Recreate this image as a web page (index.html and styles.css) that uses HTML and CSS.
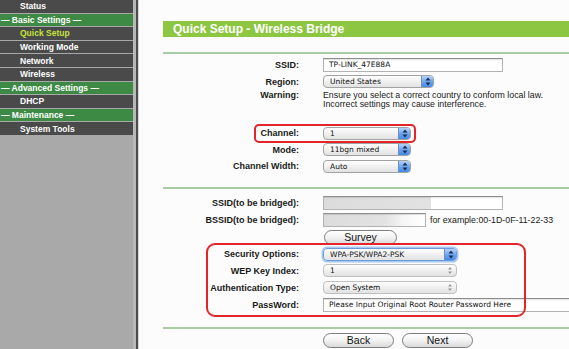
FILE: index.html
```html
<!DOCTYPE html>
<html>
<head>
<meta charset="utf-8">
<link rel="stylesheet" href="styles.css">
</head>
<body>
<div class="page">
  <nav class="side">
    <div class="menu">
      <div class="item">Status</div>
      <div class="group">— Basic Settings —</div>
      <div class="item active">Quick Setup</div>
      <div class="item">Working Mode</div>
      <div class="item">Network</div>
      <div class="item">Wireless</div>
      <div class="group">— Advanced Settings —</div>
      <div class="item">DHCP</div>
      <div class="group">— Maintenance —</div>
      <div class="item">System Tools</div>
    </div>
  </nav>
  <main class="main">
    <div class="titlebar">Quick Setup - Wireless Bridge</div>
    <div class="rule"></div>

    <section class="block b1">
      <div class="row"><div class="lbl">SSID:</div><div class="inp w180">TP-LINK_47E88A</div></div>
      <div class="row"><div class="lbl">Region:</div><div class="sel w111"><span class="txt">United States</span><span class="arr"><svg width="6" height="9" viewBox="0 0 6 9"><path d="M3 0.5L5.5 3.5H0.5Z M3 8.5L5.5 5.5H0.5Z" fill="#1b2c4a"/></svg></span></div></div>
      <div class="row warn"><div class="lbl">Warning:</div><div class="note">Ensure you select a correct country to conform local law.<br>Incorrect settings may cause interference.</div></div>
      <div class="row ch"><div class="lbl">Channel:</div><div class="sel w88"><span class="txt">1</span><span class="arr"><svg width="6" height="9" viewBox="0 0 6 9"><path d="M3 0.5L5.5 3.5H0.5Z M3 8.5L5.5 5.5H0.5Z" fill="#1b2c4a"/></svg></span></div></div>
      <div class="row ch"><div class="lbl">Mode:</div><div class="sel w88"><span class="txt">11bgn mixed</span><span class="arr"><svg width="6" height="9" viewBox="0 0 6 9"><path d="M3 0.5L5.5 3.5H0.5Z M3 8.5L5.5 5.5H0.5Z" fill="#1b2c4a"/></svg></span></div></div>
      <div class="row ch"><div class="lbl">Channel Width:</div><div class="sel w88"><span class="txt">Auto</span><span class="arr"><svg width="6" height="9" viewBox="0 0 6 9"><path d="M3 0.5L5.5 3.5H0.5Z M3 8.5L5.5 5.5H0.5Z" fill="#1b2c4a"/></svg></span></div></div>
    </section>
    <div class="rule r2"></div>

    <section class="block b2">
      <div class="row"><div class="lbl">SSID(to be bridged):</div><div class="inp w180 blurred"></div></div>
      <div class="row"><div class="lbl">BSSID(to be bridged):</div><div class="inp w103 blurred"></div><span class="example">for example:00-1D-0F-11-22-33</span></div>
      <div class="row survey"><div class="lbl"></div><div class="btn bsurvey">Survey</div></div>
      <div class="row"><div class="lbl">Security Options:</div><div class="sel w134 focus"><span class="txt">WPA-PSK/WPA2-PSK</span><span class="arr"><svg width="6" height="9" viewBox="0 0 6 9"><path d="M3 0.5L5.5 3.5H0.5Z M3 8.5L5.5 5.5H0.5Z" fill="#1b2c4a"/></svg></span></div></div>
      <div class="row"><div class="lbl">WEP Key Index:</div><div class="sel w134 dis"><span class="txt">1</span><span class="arr"><svg width="6" height="9" viewBox="0 0 6 9"><path d="M3 1L5 3.5H1Z M3 8L5 5.5H1Z" fill="#9a9a9a"/></svg></span></div></div>
      <div class="row"><div class="lbl">Authentication Type:</div><div class="sel w134 dis"><span class="txt">Open System</span><span class="arr"><svg width="6" height="9" viewBox="0 0 6 9"><path d="M3 1L5 3.5H1Z M3 8L5 5.5H1Z" fill="#9a9a9a"/></svg></span></div></div>
      <div class="row"><div class="lbl">PassWord:</div><div class="inp wpass">Please Input Original Root Router Password Here</div></div>
    </section>
    <div class="rule r3"></div>

    <div class="row buttons"><div class="lbl"></div><div class="btn bnav">Back</div><div class="btn bnav">Next</div></div>

    <div class="callout co1"></div>
    <div class="callout co2"></div>
  </main>
</div>
</body>
</html>
```
FILE: styles.css
```css
* { box-sizing: border-box; }
html, body { margin: 0; padding: 0; }
body {
  width: 569px;
  height: 349px;
  overflow: hidden;
  background: #fbfcfb;
  font-family: "Liberation Sans", Arial, sans-serif;
}
.page {
  display: flex;
  height: 349px;
}
.side {
  width: 138px;
  flex: none;
  background: #a9a9a9;
  border-right: 2px solid #4c4c4c;
  box-shadow: inset -3px 0 0 #b9b9b9;
}
.menu {
  width: 133px;
  display: flex;
  flex-direction: column;
  gap: 1px;
}
.item, .group {
  height: 12.6px;
  font-size: 8.5px;
  font-weight: bold;
  color: #fff;
  display: flex;
  align-items: center;
}
.item {
  background: #4a4a4a;
  padding-left: 20px;
}
.item.active { color: #c6e23c; }
.group {
  background: #3d8a45;
  padding-left: 1px;
}
.main {
  flex: 1;
  position: relative;
  padding-left: 24px;
  border-left: 1px solid #dcdcdc;
}
.titlebar {
  margin-top: 21px;
  height: 16px;
  background: #8dc641;
  color: #fff;
  font-weight: bold;
  font-size: 12px;
  line-height: 16px;
  padding-left: 10px;
}
.rule {
  margin-top: 15px;
  height: 2px;
  background: #a6cda6;
}
.rule.r2 { margin-top: 12.5px; }
.rule.r3 { margin-top: 14px; }
.b1 { padding-top: 2px; }
.b2 { padding-top: 5px; }
.row {
  display: flex;
  align-items: center;
  height: 17px;
}
.row.warn { height: 18px; align-items: flex-start; }
.row.ch { height: 16.5px; }
.row.warn + .row.ch { margin-top: 17px; }
.row.survey { height: 18px; }
.row.survey + .row { height: 16px; }
.lbl {
  width: 136px;
  flex: none;
  margin-right: 24px;
  text-align: right;
  font-size: 9px;
  font-weight: bold;
  color: #1a1a1a;
}
.warn .lbl { line-height: 9.5px; padding-top: 0.5px; }
.note {
  font-size: 8.8px;
  line-height: 9.5px;
  color: #1a1a1a;
  padding-top: 0.5px;
}
.inp {
  height: 14px;
  background: #fff;
  border: 1px solid #b3b3b3;
  border-top-color: #8e8e8e;
  box-shadow: inset 0 1px 1px rgba(0,0,0,0.12);
  font-family: "DejaVu Sans", sans-serif;
  font-size: 7.5px;
  line-height: 12px;
  padding-left: 5px;
  color: #111;
  white-space: nowrap;
  overflow: hidden;
}
.w180 { width: 180px; }
.w103 { width: 103px; }
.wpass { width: 260px; flex: none; }
.blurred {
  background: linear-gradient(90deg, #dcdcdc 0, #e2e2e2 60%, #f6f6f6 80px, #fff 100px);
}
.example {
  margin-left: 4px;
  font-size: 8.8px;
  color: #1a1a1a;
}
.sel {
  height: 13px;
  display: flex;
  align-items: stretch;
  border: 1px solid #a2a2a2;
  border-radius: 4px;
  background: linear-gradient(#fefefe, #f0f0f0 50%, #e2e2e2);
  font-family: "DejaVu Sans", sans-serif;
  font-size: 7.5px;
  color: #111;
  overflow: hidden;
}
.sel .txt {
  flex: 1;
  padding-left: 6px;
  line-height: 11px;
  white-space: nowrap;
}
.sel .arr {
  width: 12px;
  flex: none;
  display: flex;
  align-items: center;
  justify-content: center;
  background: linear-gradient(#b4d3fa, #6fa6ee 50%, #4389e6);
  border-left: 1px solid #6b8fc0;
}
.sel.dis .arr {
  background: transparent;
  border-left: none;
}
.sel.dis { border-color: #c0c0c0; }
.sel.focus {
  border-color: #6d9ad8;
  box-shadow: 0 0 0 1.5px #a9c8f0;
}
.w111 { width: 111px; }
.w88 { width: 88px; }
.w134 { width: 134px; }
.btn {
  height: 15px;
  border: 1px solid #7d7d7d;
  border-radius: 8px;
  background: linear-gradient(#ffffff, #f2f2f2 50%, #dadada);
  font-family: "Liberation Sans", Arial, sans-serif;
  font-size: 10.5px;
  color: #111;
  display: flex;
  align-items: center;
  justify-content: center;
}
.bsurvey { width: 73px; margin-left: 1px; }
.buttons { margin-top: 3px; height: 16px; }
.bnav { width: 71px; margin-right: 8px; }
.callout {
  position: absolute;
  border: 2px solid #e4242b;
  pointer-events: none;
}
.co1 {
  left: 115px;
  top: 124px;
  width: 162px;
  height: 19px;
  border-radius: 5px;
}
.co2 {
  left: 67px;
  top: 243px;
  width: 320px;
  height: 74px;
  border-radius: 9px;
}
```
